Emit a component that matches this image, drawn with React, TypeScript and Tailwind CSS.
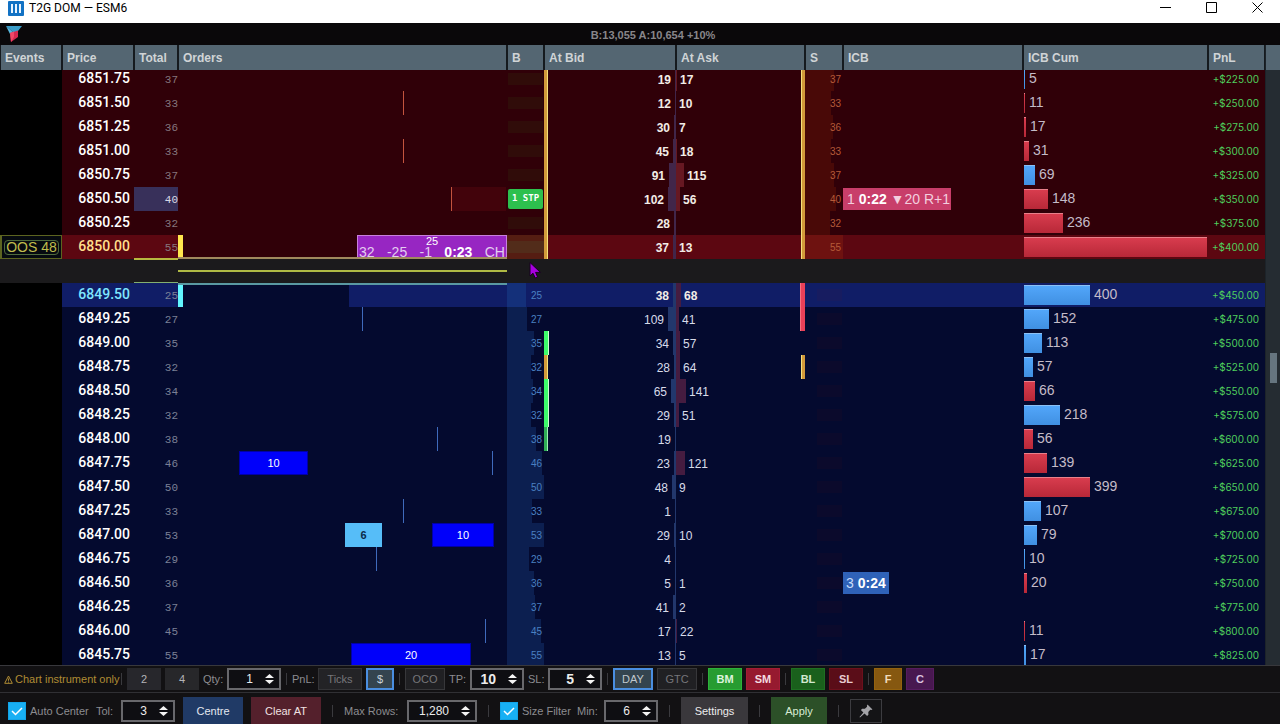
import { useLayoutEffect, useRef, useState } from "react";
import { twMerge } from "tailwind-merge";

type Side = "up" | "down";
type Edge = "gold" | "green" | "deepGreen" | "red";

interface OrderMark {
  kind: "tick" | "block" | "light" | "zone";
  at: number;
  size?: number;
  label?: string;
}

interface Level {
  price: string;
  total: number;
  bid: number;
  ask?: number;
  cum?: number;
  side?: Side;
  pnl: number;
  bidEdge?: Edge;
  askEdge?: Edge;
  marks?: OrderMark[];
}

// Order marks are placed on a time axis of 329 units.
const ORDERS_SPAN = 329;

const asks: Level[] = [
  { price: "6851.75", total: 37, bid: 19, ask: 17, cum: 5, side: "up", pnl: 225 },
  { price: "6851.50", total: 33, bid: 12, ask: 10, cum: 11, side: "down", pnl: 250, marks: [{ kind: "tick", at: 225 }] },
  { price: "6851.25", total: 36, bid: 30, ask: 7, cum: 17, side: "down", pnl: 275 },
  { price: "6851.00", total: 33, bid: 45, ask: 18, cum: 31, side: "down", pnl: 300, marks: [{ kind: "tick", at: 225 }] },
  { price: "6850.75", total: 37, bid: 91, ask: 115, cum: 69, side: "up", pnl: 325 },
  {
    price: "6850.50", total: 40, bid: 102, ask: 56, cum: 148, side: "down", pnl: 350,
    marks: [{ kind: "zone", at: 273, size: 55 }, { kind: "tick", at: 273 }],
  },
  { price: "6850.25", total: 32, bid: 28, cum: 236, side: "down", pnl: 375 },
  { price: "6850.00", total: 55, bid: 37, ask: 13, cum: 1104, side: "down", pnl: 400 },
];

const bids: Level[] = [
  { price: "6849.50", total: 25, bid: 38, ask: 68, cum: 400, side: "up", pnl: 450, askEdge: "red", marks: [{ kind: "zone", at: 171, size: 158 }] },
  { price: "6849.25", total: 27, bid: 109, ask: 41, cum: 152, side: "up", pnl: 475, askEdge: "red", marks: [{ kind: "tick", at: 184 }] },
  { price: "6849.00", total: 35, bid: 34, ask: 57, cum: 113, side: "up", pnl: 500, bidEdge: "green" },
  { price: "6848.75", total: 32, bid: 28, ask: 64, cum: 57, side: "up", pnl: 525, bidEdge: "gold", askEdge: "gold" },
  { price: "6848.50", total: 34, bid: 65, ask: 141, cum: 66, side: "down", pnl: 550, bidEdge: "green" },
  { price: "6848.25", total: 32, bid: 29, ask: 51, cum: 218, side: "up", pnl: 575, bidEdge: "green" },
  { price: "6848.00", total: 38, bid: 19, cum: 56, side: "down", pnl: 600, bidEdge: "deepGreen", marks: [{ kind: "tick", at: 259 }] },
  {
    price: "6847.75", total: 46, bid: 23, ask: 121, cum: 139, side: "down", pnl: 625,
    marks: [{ kind: "block", at: 61, size: 69, label: "10" }, { kind: "tick", at: 314 }],
  },
  { price: "6847.50", total: 50, bid: 48, ask: 9, cum: 399, side: "down", pnl: 650 },
  { price: "6847.25", total: 33, bid: 1, cum: 107, side: "up", pnl: 675, marks: [{ kind: "tick", at: 225 }] },
  {
    price: "6847.00", total: 53, bid: 29, ask: 10, cum: 79, side: "up", pnl: 700,
    marks: [{ kind: "light", at: 167, size: 37, label: "6" }, { kind: "block", at: 254, size: 62, label: "10" }],
  },
  { price: "6846.75", total: 29, bid: 4, cum: 10, side: "up", pnl: 725, marks: [{ kind: "tick", at: 198 }] },
  { price: "6846.50", total: 36, bid: 5, ask: 1, cum: 20, side: "down", pnl: 750 },
  { price: "6846.25", total: 37, bid: 41, ask: 2, pnl: 775 },
  { price: "6846.00", total: 45, bid: 17, ask: 22, cum: 11, side: "down", pnl: 800, marks: [{ kind: "tick", at: 307 }] },
  { price: "6845.75", total: 55, bid: 13, ask: 5, cum: 17, side: "up", pnl: 825, marks: [{ kind: "block", at: 173, size: 120, label: "20" }] },
];

const columns = [
  { name: "Events", width: "w-[62px]" },
  { name: "Price", width: "w-[72px]" },
  { name: "Total", width: "w-[44px]" },
  { name: "Orders", width: "" },
  { name: "B", width: "w-[37px]" },
  { name: "At Bid", width: "w-[132px]" },
  { name: "At Ask", width: "w-[129px]" },
  { name: "S", width: "w-[38px]" },
  { name: "ICB", width: "w-[180px]" },
  { name: "ICB Cum", width: "w-[185px]" },
  { name: "PnL", width: "w-[57px]" },
];

const edges: Record<Edge, string> = {
  gold: "w-1 bg-[#d29a3a] border-[#f6e07c]",
  green: "w-[5px] bg-[#3dfc6a] border-[#c8ffd0]",
  deepGreen: "w-1 bg-[#2fae56] border-[#9df0b4]",
  red: "w-[5px] bg-[#ea4058] border-[#f77080]",
};

const OrderMarks: React.FC<{ marks: OrderMark[]; bid: boolean }> = ({ marks, bid }) => (
  <>
    {marks.map((m, idx) => (
      <span
        key={idx}
        style={{
          left: `${(m.at / ORDERS_SPAN) * 100}%`,
          width: m.size ? `${(m.size / ORDERS_SPAN) * 100}%` : undefined,
        }}
        className={twMerge(
          "absolute inset-y-0 flex items-center justify-center text-[11px] text-white",
          m.kind === "tick" && (bid ? "w-px bg-[#3f6abc]" : "w-px bg-[#c4543e]"),
          m.kind === "zone" && (bid ? "bg-[#101d66]" : "bg-[#42030b]"),
          m.kind === "block" && "border border-[#0000a8] bg-[#0000fa]",
          m.kind === "light" && "bg-[#56bdf8] font-bold text-[#0b2a4a]"
        )}
      >
        {m.label}
      </span>
    ))}
  </>
);

const CumBar: React.FC<{ value: number; side?: Side }> = ({ value, side }) => {
  const width = Math.min(183, Math.max(1, Math.floor(value / 6)));
  return (
    <div className="flex h-6 items-center gap-1 pl-px">
      <span
        style={{ width }}
        className={twMerge(
          "h-5 shrink-0 border-t bg-linear-to-b",
          side === "up"
            ? "border-[#8cc0f4] from-[#52a6fa] to-[#4090e2]"
            : "border-[#e8808a] from-[#d83c4e] to-[#b82838]"
        )}
      />
      {width < 150 && <span className="pb-0.5 text-sm leading-5 text-[#c4bcc8]">{value}</span>}
    </div>
  );
};

const Row: React.FC<{ level: Level; bid: boolean }> = ({ level, bid }) => {
  const inside = level.price === "6850.00" || level.price === "6849.50";
  const base = bid ? "bg-[#040a2f]" : "bg-[#300008]";
  const band = inside ? (bid ? "bg-[#101d66]" : "bg-[#5c0711]") : base;
  const strong = !bid || inside;
  const bidEdge = level.bidEdge ?? (bid ? undefined : "gold");
  const askEdge = level.askEdge ?? (bid ? undefined : "gold");
  const hot = level.price === "6850.50";

  return (
    <tr className={band}>
      <td className="bg-black p-0">
        {level.price === "6850.00" && (
          <div className="flex h-6 items-center border border-l-2 border-[#5c6420] bg-[#060a10] px-0.5">
            <span className="flex h-[15px] w-full items-center justify-center rounded-sm border border-[#4f6a3c] text-sm leading-none whitespace-nowrap text-[#c0bc4c]">
              OOS 48
            </span>
          </div>
        )}
      </td>
      <td
        className={twMerge(
          "h-6 p-0 pr-1 pb-0.5 text-right font-[Roboto,sans-serif] text-sm leading-5 font-medium text-white",
          inside && (bid ? "text-[#7fe6ff]" : "text-[#ffdf8c]")
        )}
      >
        {level.price}
      </td>
      <td
        className={twMerge(
          "relative p-0 pt-0.5 text-right font-['Liberation_Mono',monospace] text-[11px] leading-5 text-[#86767e]",
          bid && "text-[#7b8096]",
          hot && "bg-[#38305a] text-[#d8d8e4]"
        )}
      >
        {level.total}
        {level.price === "6850.00" && <span className="absolute inset-x-0 bottom-0 h-px bg-[#b8b840]" />}
      </td>
      <td className={twMerge("p-0", base)}>
        <div className="relative h-6">
          {level.marks && <OrderMarks marks={level.marks} bid={bid} />}
          {inside && (
            <span className={twMerge("absolute inset-y-0 left-0 w-[5px]", bid ? "bg-[#62f6ff]" : "bg-[#ffe74e]")} />
          )}
          {level.price === "6850.00" && (
            <div className="absolute inset-y-0 right-0 w-[150px] border border-[#c880dc] bg-[#9726c2] text-[#e4cdf0]">
              <p className="text-center text-[11px] leading-[11px] text-white">25</p>
              <p className="flex justify-between px-px text-sm leading-[11px]">
                <span>32</span>
                <span>-25</span>
                <span>-1</span>
                <b className="text-white">0:23</b>
                <span>CH</span>
              </p>
            </div>
          )}
          {inside && (
            <span className={twMerge("absolute inset-x-0 h-0.5", bid ? "top-0 bg-[#5a99a2]" : "bottom-0 bg-[#a08a5e]")} />
          )}
        </div>
      </td>
      <td className="p-0">
        {bid ? (
          <div className="relative flex h-6 items-center justify-end pr-0.5 text-[10px] text-[#4a80c2]">
            <span
              style={{ width: `${Math.min(100, level.total * 2.05)}%` }}
              className={twMerge("absolute inset-y-0 left-0", inside ? "bg-[#14307a]" : "bg-[#0c1f50]")}
            />
            <span className="relative">{level.total}</span>
          </div>
        ) : (
          <div className={twMerge("flex h-6 items-center px-px", inside && "bg-[#551d12] px-0")}>
            {hot ? (
              <button
                type="button"
                className="h-5 w-full rounded-[2px] bg-[#2dc04e] font-['DejaVu_Sans_Mono',monospace] text-[9px] font-bold whitespace-nowrap text-white"
              >
                1 STP
              </button>
            ) : (
              <span className={twMerge("h-3 w-full bg-[#300c09]", inside && "bg-[#522c1a]")} />
            )}
          </div>
        )}
      </td>
      <td className="relative p-0">
        {bidEdge && <span className={twMerge("absolute inset-y-0 left-0 border-r", edges[bidEdge])} />}
        <div
          className={twMerge(
            "flex h-6 items-center justify-end gap-1 text-xs text-[#d8dcea]",
            strong && "font-bold text-[#f2ece6]"
          )}
        >
          <span className="pt-0.5">{level.bid}</span>
          <span
            style={{ width: Math.max(1, Math.round(level.bid * 0.075)) }}
            className={twMerge("h-full", bid ? "bg-[#22376c]" : "bg-[#41264a]")}
          />
        </div>
      </td>
      <td className="relative p-0">
        {askEdge && <span className={twMerge("absolute inset-y-0 right-0 border-l", edges[askEdge])} />}
        {level.ask && (
          <div
            className={twMerge(
              "flex h-6 items-center gap-[3px] text-xs text-[#d8dcea]",
              strong && "font-bold text-[#f2ece6]"
            )}
          >
            <span
              style={{ width: Math.floor(level.ask * 0.075) }}
              className={twMerge("h-full", bid ? "bg-[#451c40]" : "bg-[#661822]")}
            />
            <span className="pt-0.5">{level.ask}</span>
          </div>
        )}
      </td>
      <td className="p-0">
        {bid ? (
          <div className="flex h-6 items-center pr-px pl-3">
            <span className={twMerge("h-3 w-full bg-[#0b0a2c]", inside && "bg-[#171c60]")} />
          </div>
        ) : (
          <div className="relative flex h-6 items-center justify-end pr-0.5 text-[10px] text-[#b65a38]">
            <span
              style={{ width: `${Math.min(100, level.total * 2.05)}%` }}
              className={twMerge("absolute inset-y-0 left-0", inside ? "bg-[#6e1210]" : "bg-[#490907]")}
            />
            <span className="relative">{level.total}</span>
          </div>
        )}
      </td>
      <td className="p-0 text-sm leading-[22px] text-[#f3cede]">
        {hot && (
          <span className="block w-[108px] bg-[#c83e6a] pl-1 whitespace-nowrap">
            1 <b className="text-white">0:22</b> ▼20 R+1
          </span>
        )}
        {level.price === "6846.50" && (
          <span className="block w-[46px] bg-[#2f62b8] pl-[3px] whitespace-nowrap text-[#c8dcfa]">
            3 <b className="text-white">0:24</b>
          </span>
        )}
      </td>
      <td className="p-0">{level.cum && <CumBar value={level.cum} side={level.side} />}</td>
      <td className="p-0 pr-1.5 text-right font-[Inter,sans-serif] text-[10px] text-[#4fce5c]">
        +${level.pnl}.00
      </td>
    </tr>
  );
};

const GapRow = () => (
  <tr className="bg-[#1b1a1c]">
    <td colSpan={2} className="h-6 p-0" />
    <td className="p-0">
      <div className="flex h-6 flex-col justify-between">
        <span className="h-px bg-[#b8b840]" />
        <span className="h-px bg-[#84b070]" />
      </div>
    </td>
    <td className="p-0">
      <div className="h-0.5 bg-[#b0ba44]" />
    </td>
    <td className="p-0">
      <svg width="13" height="18" viewBox="0 0 13 18" className="ml-[22px] block">
        <path d="M1 .500v13.500l3-2.800 2.200 4.800 2.400-1.100-2-4.500h4.800z" fill="#a800e0" stroke="#180020" />
      </svg>
    </td>
    <td colSpan={6} className="p-0" />
  </tr>
);

const Divider: React.FC<{ className?: string }> = ({ className }) => (
  <span className={twMerge("mx-px h-3 w-px shrink-0 bg-[#3a3a3e]", className)} />
);

interface SpinProps {
  name: string;
  initial: string;
  className?: string;
  labelClass?: string;
}

const Spin: React.FC<SpinProps> = ({ name, initial, className, labelClass }) => {
  const [value, setValue] = useState<string>(initial);
  const id = name.toLowerCase().replace(" ", "-");

  return (
    <>
      <label htmlFor={id} className={twMerge("shrink-0 whitespace-nowrap", labelClass)}>
        {name}:
      </label>
      <span
        className={twMerge(
          "flex h-[22px] w-[54px] shrink-0 items-center gap-3 border-2 border-[#68686c] bg-[#0e0e12] pr-[5px] text-xs text-[#ececec]",
          className
        )}
      >
        <input
          id={id}
          value={value}
          onChange={(e) => setValue(e.target.value)}
          className="w-full min-w-0 bg-transparent text-right outline-none"
        />
        <svg width="9" height="10" viewBox="0 0 9 10" fill="#f4f4f4" className="shrink-0">
          <path d="M4.500 0 9 4H0zM4.500 10 9 6H0z" />
        </svg>
      </span>
    </>
  );
};

const Tick: React.FC<{ id: string; label: string; labelClass: string }> = ({ id, label, labelClass }) => (
  <span className="flex shrink-0 items-center gap-1">
    <span className="grid">
      <input
        id={id}
        type="checkbox"
        defaultChecked
        className="peer col-start-1 row-start-1 size-[18px] appearance-none border border-[#12a4e8] bg-[#26262b] checked:bg-[#18b0f4]"
      />
      <svg
        viewBox="0 0 18 18"
        className="pointer-events-none col-start-1 row-start-1 hidden size-[18px] peer-checked:block"
        fill="none"
        stroke="white"
        strokeWidth="1.5"
      >
        <path d="M4 9l3.500 3.500L14 6" />
      </svg>
    </span>
    <label htmlFor={id} className={twMerge("whitespace-nowrap", labelClass)}>
      {label}
    </label>
  </span>
);

const Key: React.FC<{ children: React.ReactNode; className?: string }> = ({ children, className }) => (
  <button
    type="button"
    className={twMerge("h-[22px] w-[34px] shrink-0 border border-transparent text-[11px]", className)}
  >
    {children}
  </button>
);

const App = () => {
  const ladder = useRef<HTMLDivElement>(null);

  useLayoutEffect(() => {
    if (ladder.current) ladder.current.scrollTop = 3;
  }, []);

  return (
    <main className="flex h-screen min-w-[960px] flex-col overflow-hidden bg-[#121113] font-['Liberation_Sans',Arial,sans-serif]">
      <header className="flex h-[23px] shrink-0 items-start justify-between bg-white pl-2">
        <h1 className="flex items-center gap-[5px] font-[Roboto,sans-serif] text-xs leading-4 text-black">
          <svg width="16" height="15" viewBox="0 0 16 15">
            <rect width="16" height="15" rx="1" fill="#1272c4" />
            <path d="M3 3h2v9H3zM7 3h2v9H7zM11 3h2v9h-2z" fill="#e8f4ff" />
          </svg>
          T2G DOM — ESM6
        </h1>
        <div className="flex">
          <button type="button" aria-label="Minimise" className="flex h-[15px] w-[46px] items-center justify-center">
            <svg width="11" height="11" stroke="black">
              <path d="M0 5.500h11" />
            </svg>
          </button>
          <button type="button" aria-label="Maximise" className="flex h-[15px] w-[46px] items-center justify-center">
            <svg width="11" height="11" fill="none" stroke="black">
              <path d="M.5.500h10v10H.5z" />
            </svg>
          </button>
          <button type="button" aria-label="Close" className="flex h-[15px] w-[46px] items-center justify-center">
            <svg width="11" height="11" stroke="black">
              <path d="M.5.500l10 10M10.500.500l-10 10" />
            </svg>
          </button>
        </div>
      </header>

      <div className="grid h-[22px] shrink-0 grid-cols-[1fr_auto_1fr] items-center bg-[#0a080a] px-1.5">
        <svg width="16" height="16" viewBox="0 0 16 16">
          <path d="M0 0h16l-4 5-4 2z" fill="#3a9cc8" />
          <path d="M0 0l8 7-4 1z" fill="#58b8e0" />
          <path d="M4 7l8-2.500V11l-7 5z" fill="#d82850" />
          <path d="M4 7l4-1.500V11l-3 5z" fill="#f04868" />
        </svg>
        <p className="pt-0.5 pl-[26px] text-[11px] font-bold text-[#88868a]">B:13,055 A:10,654 +10%</p>
      </div>

      <section className="flex min-h-0 flex-1">
        <div ref={ladder} className="min-w-0 flex-1 overflow-y-auto [scrollbar-width:none]">
          <table className="w-full table-fixed border-separate border-spacing-0">
            <thead className="sticky top-0 z-10">
              <tr>
                {columns.map((c) => (
                  <th
                    key={c.name}
                    className={twMerge(
                      "h-[25px] border-x border-[#151a1e] bg-[#546672] p-0 pl-1 text-left text-xs font-bold whitespace-nowrap text-[#d0d4d6]",
                      c.width
                    )}
                  >
                    {c.name}
                  </th>
                ))}
              </tr>
            </thead>
            <tbody>
              {asks.map((level) => (
                <Row key={level.price} level={level} bid={false} />
              ))}
              <GapRow />
              {bids.map((level) => (
                <Row key={level.price} level={level} bid />
              ))}
            </tbody>
          </table>
        </div>
        <div className="flex w-[15px] shrink-0 flex-col border-l border-[#1c2329] bg-[#252c32]">
          <div className="h-[25px] bg-[#546672]" />
          <div className="flex flex-1 flex-col items-center">
            <span className="grow-283" />
            <span className="h-[30px] w-[7px] bg-[#66757f]" />
            <span className="grow-282" />
          </div>
        </div>
      </section>

      <footer className="shrink-0 text-[11px] text-[#8c8c90]">
        <div className="flex h-[27px] items-center gap-1 border-t border-[#38383c] pl-1">
          <p className="flex w-28 shrink-0 items-center gap-0.5 whitespace-nowrap text-[#b08c34]">
            <svg width="9" height="9" viewBox="0 0 9 9" fill="none" stroke="currentColor" className="shrink-0">
              <path d="M4.500 1 8.300 8.300H.7zM4.500 3.500v2.300M4.500 6.600v1" />
            </svg>
            Chart instrument only
          </p>
          <Divider />
          <Key className="bg-[#27272c] text-[#b4b4b8]">2</Key>
          <Key className="bg-[#27272a] text-[#b4b4b8]">4</Key>
          <Spin name="Qty" initial="1" labelClass="w-5" />
          <Divider />
          <span className="w-[22px] shrink-0">PnL:</span>
          <Key className="w-11 border-[#333336] bg-[#232326] text-[#76767a]">Ticks</Key>
          <Key className="w-7 border-2 border-[#4a8ee0] bg-[#34444f] text-[#c8d4dc]">$</Key>
          <Divider />
          <Key className="w-10 border-[#37373a] bg-[#202023] text-[#76767a]">OCO</Key>
          <Spin name="TP" initial="10" className="text-sm font-bold" labelClass="w-[17px]" />
          <Spin name="SL" initial="5" className="text-sm font-bold" labelClass="w-4" />
          <Divider />
          <Key className="w-10 border-2 border-[#4a8ee0] bg-[#34444f] text-[#c0c8ce]">DAY</Key>
          <Key className="w-10 border-[#37373a] bg-[#202023] text-[#76767a]">GTC</Key>
          <Divider />
          <Key className="border-[#2cb23a] bg-[#279c31] font-bold text-[#dcf4dc]">BM</Key>
          <Key className="border-[#a41c36] bg-[#961a2f] font-bold text-[#f4dce0]">SM</Key>
          <Divider />
          <Key className="border-[#1e7022] bg-[#1a601c] font-bold text-[#d0e8d0]">BL</Key>
          <Key className="border-[#6c101c] bg-[#5a0d18] font-bold text-[#e8ccd0]">SL</Key>
          <Divider />
          <Key className="w-7 border-[#94620e] bg-[#865810] font-bold text-[#f0dcbc]">F</Key>
          <Key className="w-7 border-[#561c60] bg-[#481850] font-bold text-[#dcc4e0]">C</Key>
        </div>
        <div className="flex h-8 items-start gap-2 border-t border-[#303034] pt-1 pl-2 *:h-7">
          <Tick id="auto-center" label="Auto Center" labelClass="w-[58px]" />
          <div className="flex items-center gap-2">
            <Spin name="Tol" initial="3" labelClass="w-[17px]" />
          </div>
          <Key className="w-[60px] bg-[#203a66] text-[#e4e8f0]">Centre</Key>
          <Key className="w-[70px] bg-[#54202c] text-[#f0e0e2]">Clear AT</Key>
          <div className="flex items-center px-[3px]">
            <Divider className="mx-0" />
          </div>
          <div className="flex items-center gap-2">
            <Spin name="Max Rows" initial="1,280" className="w-[70px]" labelClass="w-[55px]" />
          </div>
          <div className="flex items-center px-[3px]">
            <Divider className="mx-0" />
          </div>
          <Tick id="size-filter" label="Size Filter" labelClass="w-[47px]" />
          <div className="flex items-center gap-2">
            <Spin name="Min" initial="6" labelClass="w-[19px]" />
          </div>
          <div className="flex items-center px-[3px]">
            <Divider className="mx-0" />
          </div>
          <Key className="w-[67px] bg-[#3a383c] text-[#ececec]">Settings</Key>
          <div className="flex items-center px-[3px]">
            <Divider className="mx-0" />
          </div>
          <Key className="w-14 bg-[#2c5028] text-[#d8ecd4]">Apply</Key>
          <div className="flex items-center px-[3px]">
            <Divider className="mx-0" />
          </div>
          <div className="flex items-center">
            <button
              type="button"
              aria-label="Pin window"
              className="flex h-6 w-8 items-center justify-center border border-[#3c3c40] bg-[#141416]"
            >
              <svg width="14" height="14" viewBox="0 0 14 14" fill="#a4a4a8">
                <path d="M8.500.500 13.500 5.500l-1.300.5-.9-.2-2 2.300.1 2.600-1.300 1.300-2.600-2.600L1 13.500l-.5-.5 3.900-4.600L1.900 6l1.300-1.300 2.700.1 2.200-2-.2-1z" />
              </svg>
            </button>
          </div>
        </div>
      </footer>
    </main>
  );
};

export default App;
